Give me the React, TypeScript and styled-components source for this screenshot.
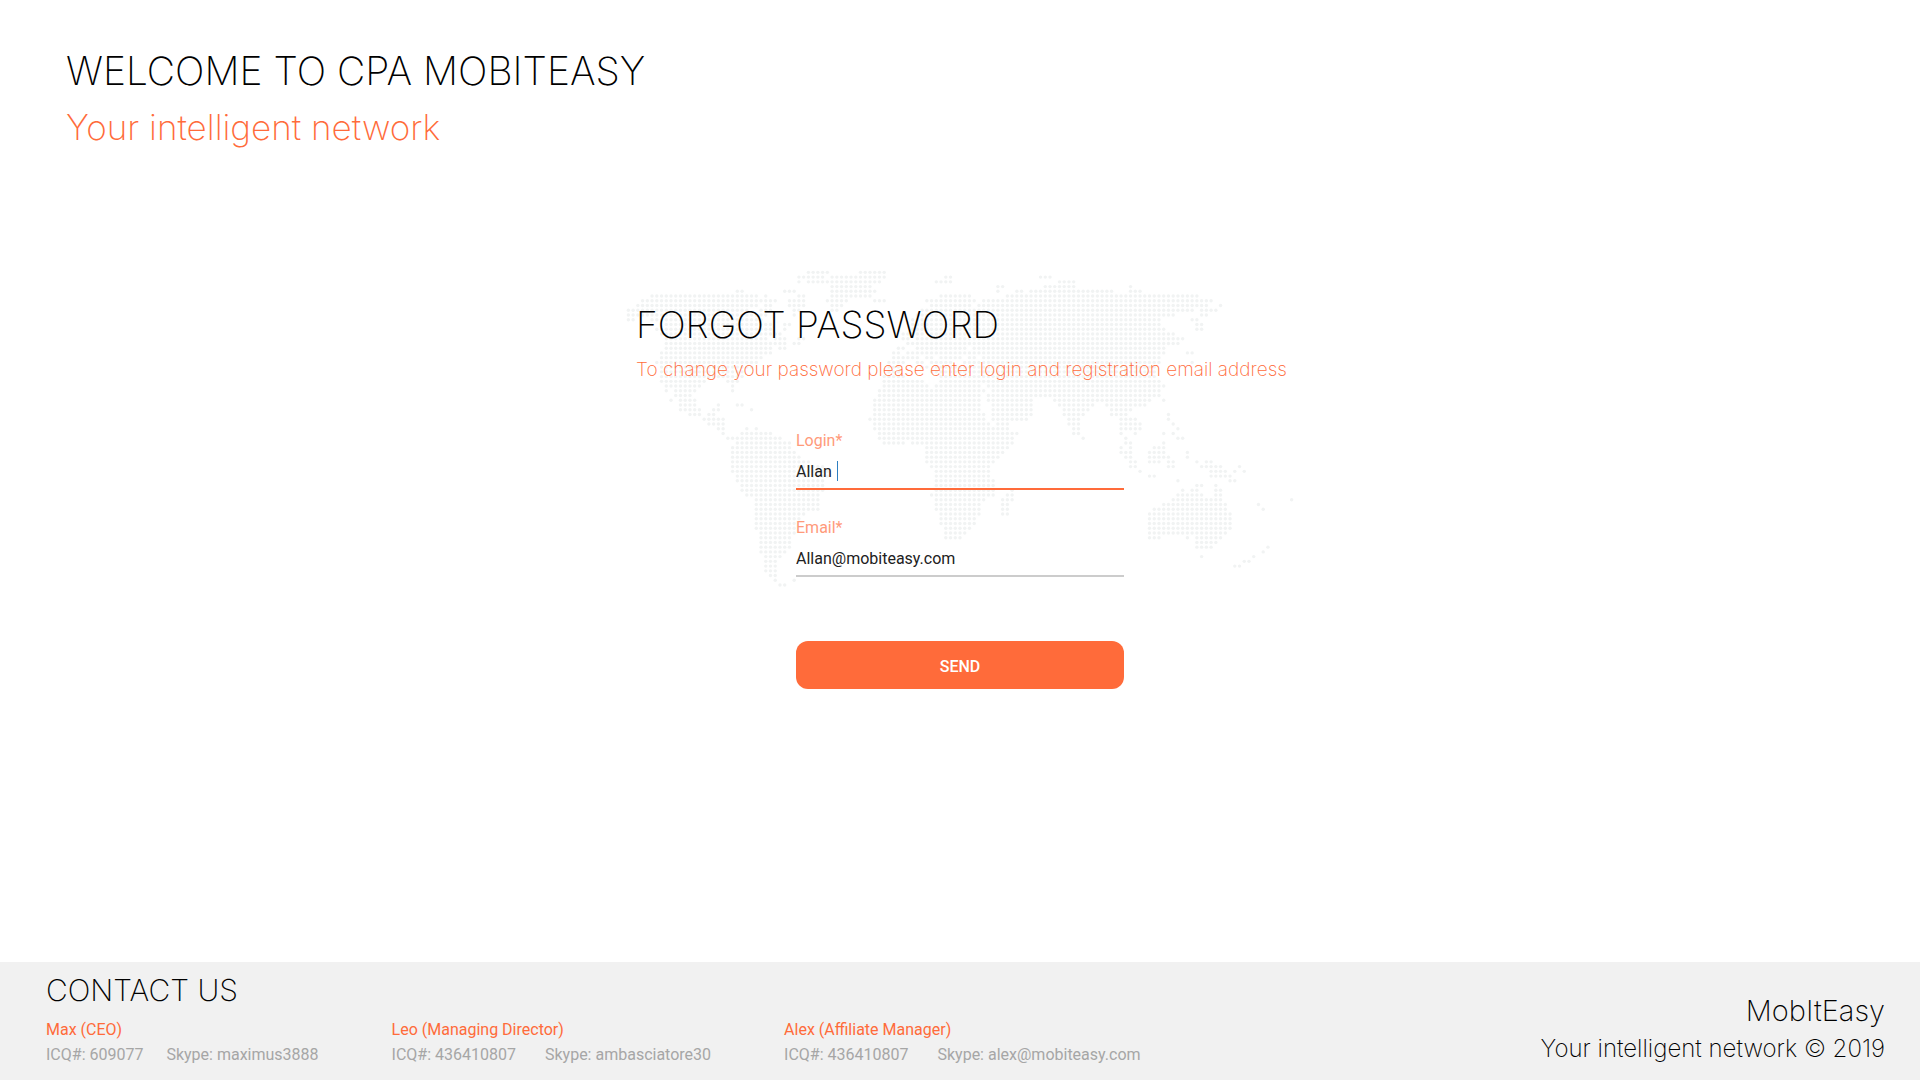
import React, { useState } from "react";
import styled, { createGlobalStyle } from "styled-components";

const color = {
  accent: "#ff6b3a",
  accentSoft: "#ff9a7b",
  ink: "#000000",
  text: "#212121",
  muted: "#a6a6a6",
  line: "#cccccc",
  dot: "#f1f3f3",
  footer: "#f1f1f1",
};

const display = `Inter, "Open Sans", sans-serif`;
const body = `Roboto, "Noto Sans", sans-serif`;

const GlobalStyle = createGlobalStyle`
  *, *::before, *::after { box-sizing: border-box; }
  body { margin: 0; background: #ffffff; color: ${color.ink}; font-family: ${body}; }
  h1, h2, p { margin: 0; font-weight: inherit; }
`;

const Page = styled.div`
  display: flex;
  flex-direction: column;
  min-height: 100vh;
`;

const Header = styled.header`
  display: flex;
  flex-direction: column;
  gap: 12px;
  padding: 47px 66px 0;
  font-family: ${display};
  font-weight: 200;
`;

const Welcome = styled.h1`
  font-size: 39px;
  line-height: 48px;
`;

const Tagline = styled.p`
  color: ${color.accent};
  font-size: 35px;
  line-height: 40px;
`;

const Main = styled.main`
  flex: 1;
  display: grid;
  justify-content: center;
  align-content: start;
  padding: 123px 24px 64px;
`;

const MapLayer = styled.svg`
  grid-area: 1 / 1;
  justify-self: center;
  align-self: start;
  width: 668px;
  height: 320px;
  fill: ${color.dot};
`;

const Panel = styled.section`
  grid-area: 1 / 1;
  display: flex;
  flex-direction: column;
  width: 668px;
  padding: 35px 0 0 10px;
`;

const PanelTitle = styled.h2`
  font-family: ${display};
  font-weight: 200;
  font-size: 37px;
  line-height: 40px;
`;

const PanelHint = styled.p`
  margin-top: 13px;
  color: ${color.accent};
  font-family: ${display};
  font-weight: 200;
  font-size: 19px;
  line-height: 24px;
  white-space: nowrap;
`;

const Form = styled.form`
  display: flex;
  flex-direction: column;
  gap: 26px;
  width: 328px;
  margin: 47px 0 0 160px;
`;

const Field = styled.div`
  position: relative;
  display: flex;
  flex-direction: column;
`;

const Label = styled.label`
  color: ${color.accentSoft};
  font-size: 16px;
  line-height: 24px;
`;

const TextInput = styled.input<{ $active?: boolean }>`
  height: 37px;
  padding: 1px 0 0;
  border: 0;
  border-bottom: 2px solid ${(p) => (p.$active ? color.accent : color.line)};
  border-radius: 0;
  outline: 0;
  background: transparent;
  color: ${color.text};
  font-family: ${body};
  font-size: 16px;
`;

const Caret = styled.span`
  position: absolute;
  left: 41px;
  bottom: 9px;
  width: 1px;
  height: 20px;
  background: #2d7fc1;
`;

const SendButton = styled.button`
  height: 48px;
  margin-top: 38px;
  padding: 2px 0 0;
  border: 0;
  border-radius: 12px;
  background: ${color.accent};
  color: #ffffff;
  font-family: ${body};
  font-weight: 500;
  font-size: 16px;
  cursor: pointer;
`;

const Footer = styled.footer`
  display: flex;
  justify-content: space-between;
  align-items: flex-end;
  gap: 48px;
  padding: 10px 35px 13px 46px;
  background: ${color.footer};
`;

const Contacts = styled.div`
  display: flex;
  flex-direction: column;
`;

const FooterTitle = styled.h2`
  font-family: ${display};
  font-weight: 200;
  font-size: 30px;
  line-height: 36px;
`;

const People = styled.div`
  display: flex;
  gap: 73px;
  margin-top: 9px;
`;

const Person = styled.div`
  font-size: 16px;
  line-height: 25px;
  white-space: nowrap;
`;

const PersonName = styled.p`
  color: ${color.accent};
`;

const PersonLinks = styled.p<{ $gap: number }>`
  display: flex;
  gap: ${(p) => p.$gap}px;
  color: ${color.muted};
`;

const Brand = styled.div`
  text-align: right;
  font-family: ${display};
  font-weight: 200;
`;

const BrandName = styled.p`
  font-size: 29px;
  line-height: 40px;
`;

const BrandNote = styled.p`
  font-size: 24px;
  line-height: 36px;
`;

/* One entry per row of the map: the columns that carry a dot, as single columns or ranges. */
const mapRows = [
  "38-42 49-54",
  "36-41 43-54 67-68 87-89",
  "36 38-42 43-53 65-68 91-94",
  "43-51 78-79 88-94 106",
  "23-24 33-35 43-52 78 82-83 85-102 106-108",
  "5-15 16-27 29 36-37 43-51 66-72 80-120",
  "3-31 34-37 42-46 52-54 63-73 75-123",
  "2-27 29-30 34-37 43-45 64-72 74-122 125",
  "0-25 28-30 35-36 43-44 62-119 121-124",
  "0-29 35 61-115 121-122",
  "0-1 5-28 60-112 119-120",
  "8-30 33-34 60-112 120-121",
  "6-30 33 60-113 120-121",
  "7-32 58-62 64-115",
  "8-29 31-33 36-37 58-59 61-115 116-117",
  "8-33 35-36 59-114 115-116",
  "8-30 32-33 57-58 61-71 73-113",
  "7-30 56-57 59-113 118-119",
  "7-28 56-61 63-64 66-70 72-73 75-112",
  "6-27 55-58 61-62 64-68 71-112 119",
  "7-26 55-57 62-63 65-111",
  "7-24 55-57 64-111",
  "7-24 54-58 66-111",
  "7-16 21-23 54-62 66-112",
  "8-15 22 54-63 65-74 76-113",
  "8 10-14 22 53-75 77-112",
  "10-13 53-74 76-112",
  "9 11-14 52-74 76-85 90-110 113",
  "11-14 19 23-24 52-74 77-85 91-98 101-109",
  "11-15 18-19 26 52-74 77-85 92-97 102-106",
  "13-15 17-18 52-75 77-85 92-96 102-105 114",
  "16-20 51-75 77-84 93-95 104-107 114",
  "17-20 52-76 78-80 93-95 104-108 115",
  "19-20 25 27 52-80 94-95 104-108 116",
  "20 24-30 53-82 94-95 104 107 113 115",
  "21-32 53-81 96 105 116-117",
  "23-34 54-58 60-81 105-106 113",
  "22-34 63-80 104 106 111-113",
  "22-35 63-79 104-106 110-113 118",
  "22-36 63-78 105-106 110-114 118",
  "22-38 63-77 106-107 110-112 114-115 120 122-123",
  "22-41 64-76 106-107 114-115 121-125 129",
  "22-42 65-76 108 123-126 128 130",
  "23-42 65-76 110-111 123-127",
  "23-41 65-77 116 127-128",
  "24-41 65-77 120-121 124",
  "24-41 65-77 81 117 119-120 124-125",
  "25-40 64-77 80-81 116-121 124-125",
  "27-40 65-75 79-81 115-125 140",
  "27-40 65-74 79-80 113-126 133",
  "27-40 65-74 79-80 111-126 134",
  "27-37 66-74 79-80 110-127",
  "27-36 66-73 110-127",
  "27-35 66-73 110-127",
  "27-35 67-72 110-127",
  "28-35 67-71 110-126",
  "28-34 67-70 110-112 118 120-125",
  "28-34 120-124",
  "28-34 120-123 135",
  "28-33 134",
  "29-32 121 132",
  "29-31 130-131",
  "29-31 128-129",
  "29-31",
  "30-31",
  "31 35",
  "32-33",
];

const dots = mapRows.flatMap((row, y) =>
  row.split(" ").flatMap((part) => {
    const [from, to = from] = part.split("-").map(Number);
    return Array.from({ length: to - from + 1 }, (_, i) => ({ x: from + i, y }));
  })
);

const WorldMap = () => (
  <MapLayer viewBox="-0.5 -0.5 141 67.5" preserveAspectRatio="xMinYMin meet" aria-hidden="true">
    {dots.map((d) => (
      <circle key={`${d.x}-${d.y}`} cx={d.x} cy={d.y} r={0.36} />
    ))}
  </MapLayer>
);

const people = [
  { name: "Max (CEO)", icq: "609077", skype: "maximus3888", gap: 23 },
  { name: "Leo (Managing Director)", icq: "436410807", skype: "ambasciatore30", gap: 29 },
  { name: "Alex (Affiliate Manager)", icq: "436410807", skype: "alex@mobiteasy.com", gap: 29 },
];

export default function App() {
  const [login, setLogin] = useState("Allan ");
  const [email, setEmail] = useState("Allan@mobiteasy.com");

  return (
    <Page>
      <GlobalStyle />
      <Header>
        <Welcome>WELCOME TO CPA MOBITEASY</Welcome>
        <Tagline>Your intelligent network</Tagline>
      </Header>
      <Main>
        <WorldMap />
        <Panel>
          <PanelTitle>FORGOT PASSWORD</PanelTitle>
          <PanelHint>To change your password please enter login and registration email address</PanelHint>
          <Form onSubmit={(e) => e.preventDefault()}>
            <Field>
              <Label htmlFor="login">Login*</Label>
              <TextInput id="login" $active value={login} onChange={(e) => setLogin(e.target.value)} />
              <Caret />
            </Field>
            <Field>
              <Label htmlFor="email">Email*</Label>
              <TextInput id="email" type="email" value={email} onChange={(e) => setEmail(e.target.value)} />
            </Field>
            <SendButton type="submit">SEND</SendButton>
          </Form>
        </Panel>
      </Main>
      <Footer>
        <Contacts>
          <FooterTitle>CONTACT US</FooterTitle>
          <People>
            {people.map((p) => (
              <Person key={p.name}>
                <PersonName>{p.name}</PersonName>
                <PersonLinks $gap={p.gap}>
                  <span>ICQ#: {p.icq}</span>
                  <span>Skype: {p.skype}</span>
                </PersonLinks>
              </Person>
            ))}
          </People>
        </Contacts>
        <Brand>
          <BrandName>MobItEasy</BrandName>
          <BrandNote>Your intelligent network © 2019</BrandNote>
        </Brand>
      </Footer>
    </Page>
  );
}
